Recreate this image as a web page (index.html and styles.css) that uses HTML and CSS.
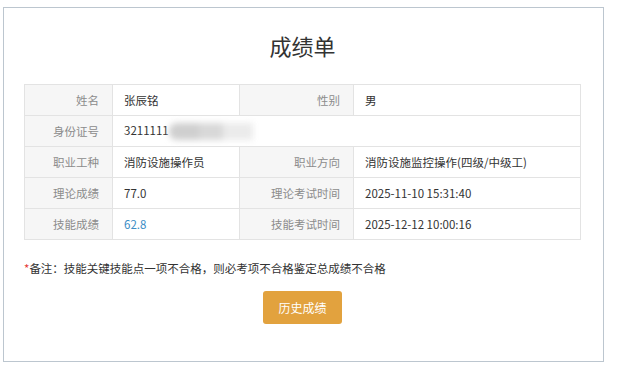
FILE: index.html
```html
<!DOCTYPE html>
<html lang="zh-CN">
<head>
<meta charset="utf-8">
<title>成绩单</title>
<link rel="stylesheet" href="styles.css">
</head>
<body>
<div class="card">
  <h1 class="title">成绩单</h1>
  <table class="grade">
    <colgroup>
      <col class="c1"><col class="c2"><col class="c3"><col class="c4">
    </colgroup>
    <tr>
      <td class="lbl">姓名</td><td class="val">张辰铭</td>
      <td class="lbl">性别</td><td class="val">男</td>
    </tr>
    <tr>
      <td class="lbl">身份证号</td>
      <td class="val" colspan="3">3211111<span class="blur"><span class="b1"></span><span class="b2"></span><span class="b3"></span></span></td>
    </tr>
    <tr>
      <td class="lbl">职业工种</td><td class="val">消防设施操作员</td>
      <td class="lbl">职业方向</td><td class="val">消防设施监控操作(四级/中级工)</td>
    </tr>
    <tr>
      <td class="lbl">理论成绩</td><td class="val">77.0</td>
      <td class="lbl">理论考试时间</td><td class="val">2025-11-10 15:31:40</td>
    </tr>
    <tr>
      <td class="lbl">技能成绩</td><td class="val blue">62.8</td>
      <td class="lbl">技能考试时间</td><td class="val">2025-12-12 10:00:16</td>
    </tr>
  </table>
  <p class="note"><span class="star">*</span>备注：技能关键技能点一项不合格，则必考项不合格鉴定总成绩不合格</p>
  <div class="actions"><button class="btn">历史成绩</button></div>
</div>
</body>
</html>
```
FILE: styles.css
```css
html, body {
  margin: 0;
  padding: 0;
  background: #fff;
}
body {
  font-family: "Noto Sans CJK SC", "Noto Sans", sans-serif;
  color: #333;
  padding: 7px 0 0 3px;
}
.card {
  box-sizing: border-box;
  width: 601px;
  height: 355px;
  border: 1px solid #bcc6cf;
  padding: 22px 0 0 20px;
}
.title {
  margin: 0;
  width: 557px;
  text-align: center;
  font-size: 22px;
  font-weight: normal;
  line-height: 30px;
  color: #333;
}
.grade {
  margin-top: 24px;
  border-collapse: collapse;
  table-layout: fixed;
  width: 557px;
  font-size: 11.5px;
}
.c1 { width: 88px; }
.c2 { width: 127px; }
.c3 { width: 114px; }
.c4 { width: 227px; }
.grade td {
  border: 1px solid #e3e3e3;
  height: 31px;
  padding: 0;
  box-sizing: border-box;
  white-space: nowrap;
}
.lbl {
  background: #f6f6f6;
  color: #8c8c8c;
  text-align: right;
  padding-right: 13px !important;
}
.val {
  color: #333;
  padding-left: 11px !important;
}
.blue { color: #3c8dc5; }
.blur {
  display: inline-block;
  vertical-align: middle;
  height: 17px;
  width: 84px;
  filter: blur(3px);
}
.blur span {
  display: inline-block;
  height: 17px;
  vertical-align: top;
}
.b1 { width: 30px; background: #cfcfcf; border-radius: 8px 0 0 8px; }
.b2 { width: 24px; background: #d8d8d8; }
.b3 { width: 30px; background: #ebebeb; }
.note {
  margin: 19px 0 0 0;
  font-size: 11.5px;
  line-height: 18px;
  color: #333;
}
.star { color: #e53935; }
.actions {
  width: 557px;
  display: flex;
  justify-content: center;
  margin-top: 14px;
}
.btn {
  width: 79px;
  height: 33px;
  border: none;
  border-radius: 3px;
  background: #e2a23e;
  color: #fff;
  font-family: "Noto Sans CJK SC", sans-serif;
  font-size: 12px;
  padding: 0;
}
```
